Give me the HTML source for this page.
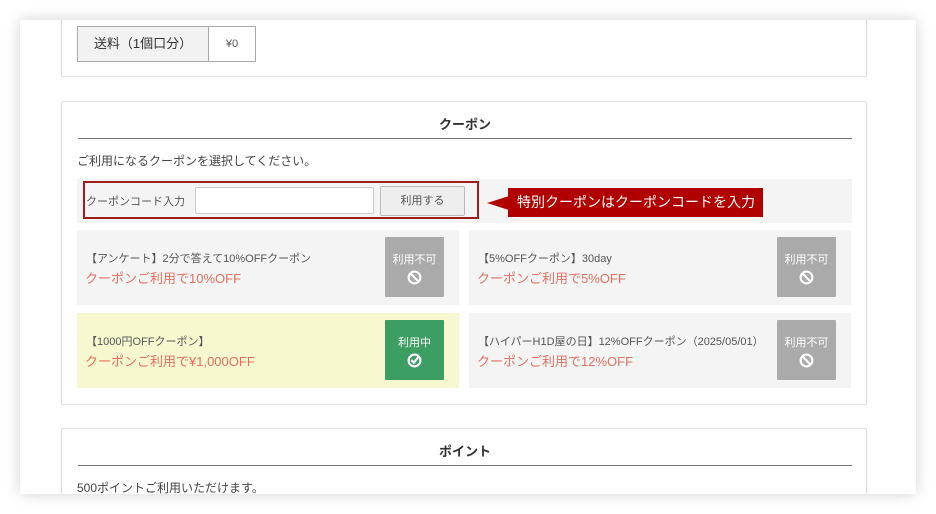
<!DOCTYPE html>
<html><head><meta charset="utf-8"><style>
*{box-sizing:border-box;margin:0;padding:0}
body{width:936px;height:514px;background:#fff;font-family:"Liberation Sans","Noto Sans CJK JP",sans-serif;color:#333;position:relative;overflow:hidden}
.card{position:absolute;left:20px;top:20px;width:896px;height:474px;background:#fff;box-shadow:0 0 14px rgba(0,0,0,.18);overflow:hidden}
.box{position:absolute;left:41px;width:806px;border:1px solid #ddd;border-radius:2px;background:#fff}
.abs{position:absolute}
.t{font-size:12px;white-space:nowrap}
.title{position:absolute;left:16px;width:774px;text-align:center;font-size:13px;font-weight:bold;border-bottom:1px solid #777;height:37px;padding-top:12px}
.cp{position:absolute;width:382px;height:75px;background:#f4f4f4}
.cp .n{position:absolute;left:9px;top:20px;font-size:11px;color:#555;white-space:nowrap}
.cp .d{position:absolute;left:8px;top:38px;font-size:13px;color:#e07060;white-space:nowrap}
.st{position:absolute;right:15px;top:7px;width:59px;height:60px;background:#aaa;color:#fff;font-size:11px;text-align:center;padding-top:14px;border-radius:1px}
.st svg{display:block;margin:3px auto 0}
</style></head><body>
<div class="card">
  <div class="box" style="top:-10px;height:67px">
    <div class="abs" style="left:15px;top:15px;width:179px;height:36px;border:1px solid #aaa;display:flex">
      <div style="width:131px;background:#f2f2f2;border-right:1px solid #aaa;font-size:13px;text-align:center;line-height:34px">送料（1個口分）</div>
      <div style="flex:1;font-size:11px;text-align:center;line-height:34px;color:#555">¥0</div>
    </div>
  </div>
  <div class="box" style="top:81px;height:304px">
    <div class="title">クーポン</div>
    <div class="abs t" style="left:15px;top:50px;color:#444">ご利用になるクーポンを選択してください。</div>
    <div class="abs" style="left:15px;top:77px;width:775px;height:44px;background:#f4f4f4"></div>
    <div class="abs" style="left:21px;top:79px;width:396px;height:38px;border:2px solid #a01c1c"></div>
    <div class="abs" style="left:24px;top:91px;font-size:11px;color:#555">クーポンコード入力</div>
    <div class="abs" style="left:133px;top:85px;width:179px;height:27px;background:#fff;border:1px solid #ccc;border-radius:2px"></div>
    <div class="abs" style="left:318px;top:84px;width:85px;height:30px;background:#eee;border:1px solid #bbb;border-radius:2px;font-size:11px;color:#555;text-align:center;line-height:28px">利用する</div>
    <div class="abs" style="left:425px;top:94px;width:0;height:0;border-top:7px solid transparent;border-bottom:7px solid transparent;border-right:22px solid #b00000"></div>
    <div class="abs" style="left:446px;top:86px;width:255px;height:29px;background:#b00000;color:#fff;font-size:14px;line-height:29px;padding-left:9px">特別クーポンはクーポンコードを入力</div>

    <div class="cp" style="left:15px;top:128px"><div class="n">【アンケート】2分で答えて10%OFFクーポン</div><div class="d">クーポンご利用で10%OFF</div>
      <div class="st">利用不可<svg width="15" height="15" viewBox="0 0 14 14"><circle cx="7" cy="7" r="5.5" fill="none" stroke="#fff" stroke-width="2"/><path d="M3.2 3.2L10.8 10.8" stroke="#fff" stroke-width="2"/></svg></div></div>
    <div class="cp" style="left:407px;top:128px"><div class="n">【5%OFFクーポン】30day</div><div class="d">クーポンご利用で5%OFF</div>
      <div class="st">利用不可<svg width="15" height="15" viewBox="0 0 14 14"><circle cx="7" cy="7" r="5.5" fill="none" stroke="#fff" stroke-width="2"/><path d="M3.2 3.2L10.8 10.8" stroke="#fff" stroke-width="2"/></svg></div></div>
    <div class="cp" style="left:15px;top:211px;background:#f8f8d0"><div class="n">【1000円OFFクーポン】</div><div class="d">クーポンご利用で¥1,000OFF</div>
      <div class="st" style="background:#3d9e64">利用中<svg width="15" height="15" viewBox="0 0 14 14"><circle cx="7" cy="7" r="5.5" fill="none" stroke="#fff" stroke-width="2"/><path d="M4 6.5L6.5 9L11 3" fill="none" stroke="#fff" stroke-width="2"/></svg></div></div>
    <div class="cp" style="left:407px;top:211px"><div class="n">【ハイパーH1D屋の日】12%OFFクーポン（2025/05/01）</div><div class="d">クーポンご利用で12%OFF</div>
      <div class="st">利用不可<svg width="15" height="15" viewBox="0 0 14 14"><circle cx="7" cy="7" r="5.5" fill="none" stroke="#fff" stroke-width="2"/><path d="M3.2 3.2L10.8 10.8" stroke="#fff" stroke-width="2"/></svg></div></div>
  </div>
  <div class="box" style="top:408px;height:100px">
    <div class="title">ポイント</div>
    <div class="abs t" style="left:15px;top:50px;color:#444">500ポイントご利用いただけます。</div>
  </div>
</div>
</body></html>
